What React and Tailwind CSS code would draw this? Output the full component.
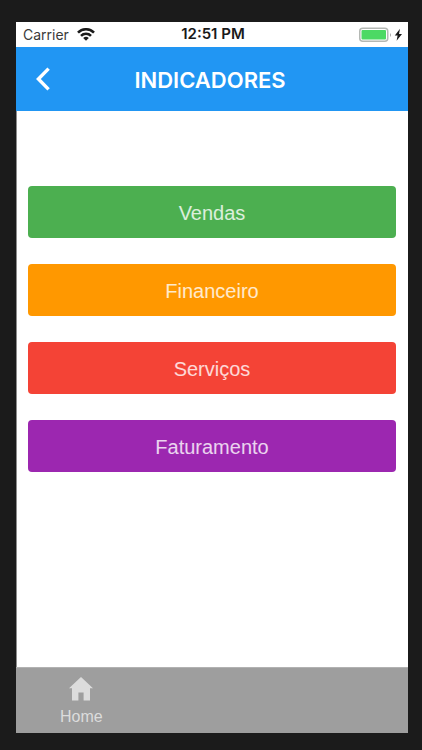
import React from 'react';

const indicators = [
  { key: 'vendas', label: 'Vendas', color: 'bg-[#4caf50]' },
  { key: 'financeiro', label: 'Financeiro', color: 'bg-[#ff9800]' },
  { key: 'servicos', label: 'Serviços', color: 'bg-[#f44336]' },
  { key: 'faturamento', label: 'Faturamento', color: 'bg-[#9c27b0]' },
];

function WifiIcon() {
  return (
    <svg viewBox="0 0 18 13" className="h-[13px] w-[18px]" fill="none" stroke="#1a1a1a" strokeWidth="2.6" aria-hidden="true">
      <path d="M1 4.6 A11.3 11.3 0 0 1 17 4.6" />
      <path d="M4 7.8 A7.1 7.1 0 0 1 14 7.8" />
      <path d="M9 12.8 L6.2 10 A4 4 0 0 1 11.8 10 Z" fill="#1a1a1a" stroke="none" />
    </svg>
  );
}

function BatteryIcon() {
  return (
    <svg viewBox="0 0 44 16" className="h-4 w-11" aria-hidden="true">
      <rect x="0.75" y="1.25" width="28" height="13" rx="3" fill="#fff" stroke="#b4b8b4" strokeWidth="1.5" />
      <rect x="2.5" y="3" width="24.5" height="9.5" rx="1" fill="#4cd964" />
      <path d="M31 6 Q33 8 31 10 Z" fill="#a6a6a6" />
      <path d="M41 1.8 L35.8 8.6 H38.6 L37.6 13.8 L43 6.9 H40 Z" fill="#1a1a1a" />
    </svg>
  );
}

function StatusBar() {
  return (
    <div className="grid h-[25px] grid-cols-3 items-center bg-white pr-[5px] pl-[7px] font-['Inter',sans-serif] text-[15px] text-[#1a1a1a]">
      <div className="flex items-center gap-2">
        <span className="text-sm text-[#3a3a3a]">Carrier</span>
        <WifiIcon />
      </div>
      <span className="text-center font-semibold whitespace-nowrap">12:51 PM</span>
      <div className="flex justify-end">
        <BatteryIcon />
      </div>
    </div>
  );
}

function Header({ title }) {
  return (
    <header className="grid h-16 grid-cols-[44px_1fr_48px] items-center bg-[#2196f3] text-white">
      <button type="button" aria-label="Voltar" className="flex h-full items-center pl-5">
        <svg viewBox="0 0 14 24" className="h-6 w-[14px]" fill="none" stroke="currentColor" strokeWidth="3.4" aria-hidden="true">
          <path d="M12.6 1.6 L2.4 12 L12.6 22.4" />
        </svg>
      </button>
      <h1 className="pt-0.5 text-center font-['Inter',sans-serif] text-[22px] font-semibold">{title}</h1>
    </header>
  );
}

function TabBar() {
  return (
    <nav className="flex h-[66px] border-t border-[#b2b2b2] bg-[#9e9e9e]">
      <a href="#home" className="flex w-1/3 flex-col items-center pt-2 text-[#dcdcdc]">
        <svg viewBox="0 0 24 25" className="h-[25px] w-6" fill="currentColor" aria-hidden="true">
          <path d="M12 1 L24 12.2 H21 V24.5 H14.6 V16.5 H9.4 V24.5 H3 V12.2 H0 Z" />
        </svg>
        <span className="mt-1 text-base leading-6">Home</span>
      </a>
    </nav>
  );
}

export default function App() {
  return (
    <div className="flex min-h-screen flex-col bg-[#1b1b1b] pt-[22px] pr-[14px] pb-[17px] pl-4 font-['Liberation_Sans',Arial,sans-serif]">
      <StatusBar />
      <Header title="INDICADORES" />
      <main className="flex flex-1 flex-col gap-[26px] border-l border-[#8c8c8c] bg-white pt-[75px] pr-3 pb-6 pl-[11px]">
        {indicators.map((item) => (
          <button key={item.key} type="button" className={`h-[52px] rounded pt-0.5 text-xl text-white/80 ${item.color}`}>
            {item.label}
          </button>
        ))}
      </main>
      <TabBar />
    </div>
  );
}
